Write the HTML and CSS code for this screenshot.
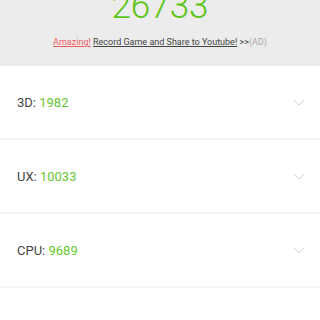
FILE: index.html
```html
<!DOCTYPE html>
<html lang="en">
<head>
    <meta charset="UTF-8">
    <meta name="viewport" content="width=device-width, initial-scale=1.0">
    <title>Score</title>
    <link rel="stylesheet" href="styles.css">
</head>
<body>
    <div class="header">
        <div class="score">26733</div>
        <div class="promo">
            <a class="amazing" href="#">Amazing!</a>
            <a class="record" href="#">Record Game and Share to Youtube!</a>
            <span class="arrows">&gt;&gt;</span><span class="ad">(AD)</span>
        </div>
    </div>

    <div class="list">
        <div class="row">
            <span class="label">3D: <span class="value">1982</span></span>
            <svg class="chevron" width="12" height="7" viewBox="0 0 12 7"><path d="M1 1 L6 6 L11 1" fill="none" stroke="#d0d0d0" stroke-width="1"/></svg>
        </div>
        <div class="row">
            <span class="label">UX: <span class="value">10033</span></span>
            <svg class="chevron" width="12" height="7" viewBox="0 0 12 7"><path d="M1 1 L6 6 L11 1" fill="none" stroke="#d0d0d0" stroke-width="1"/></svg>
        </div>
        <div class="row">
            <span class="label">CPU: <span class="value">9689</span></span>
            <svg class="chevron" width="12" height="7" viewBox="0 0 12 7"><path d="M1 1 L6 6 L11 1" fill="none" stroke="#d0d0d0" stroke-width="1"/></svg>
        </div>
        <div class="row">
            <span class="label">RAM: <span class="value">5029</span></span>
            <svg class="chevron" width="12" height="7" viewBox="0 0 12 7"><path d="M1 1 L6 6 L11 1" fill="none" stroke="#d0d0d0" stroke-width="1"/></svg>
        </div>
    </div>
</body>
</html>
```

FILE: styles.css
```css
body {
    margin: 0;
    padding: 0;
    font-family: Roboto, "Liberation Sans", sans-serif;
    background-color: #fff;
}
.header {
    height: 66px;
    background-color: #ececec;
    overflow: hidden;
}
.score {
    margin-top: -11px;
    height: 36px;
    line-height: 36px;
    font-size: 35px;
    font-weight: 300;
    color: #5cc414;
    text-align: center;
}
.promo {
    margin-top: 12px;
    font-size: 9px;
    text-align: center;
    color: #444;
}
.promo a {
    text-decoration: underline;
}
.amazing {
    color: #f05a5a;
}
.record {
    color: #444;
}
.ad {
    color: #aaa;
}
.row {
    height: 72px;
    display: flex;
    align-items: center;
    justify-content: space-between;
    padding: 0 15px 0 17px;
    border-bottom: 2px solid #f4f4f4;
}
.label {
    font-size: 13px;
    color: #444;
}
.value {
    color: #66c832;
}
```
